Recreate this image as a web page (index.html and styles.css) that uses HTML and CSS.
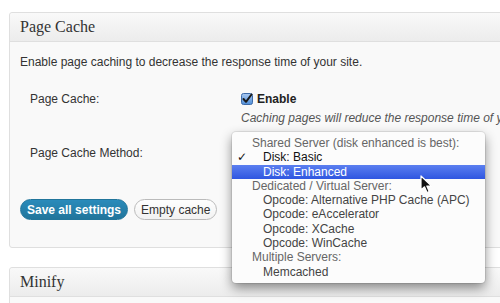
FILE: index.html
```html
<!DOCTYPE html>
<html lang="en">
<head>
    <meta charset="UTF-8">
    <title>Page Cache</title>
    <link rel="stylesheet" href="styles.css">
</head>
<body>
    <div class="wrap">
        <div class="postbox">
            <h3 class="hndle">Page Cache</h3>
            <div class="inside">
                <p class="intro">Enable page caching to decrease the response time of your site.</p>
                <div class="form-row">
                    <div class="label">Page Cache:</div>
                    <div class="field">
                        <label class="check">
                            <svg class="checkbox" width="12" height="12" viewBox="0 0 12 12">
                                <defs>
                                    <linearGradient id="cb" x1="0" y1="0" x2="0" y2="1">
                                        <stop offset="0" stop-color="#a9c8f0"/>
                                        <stop offset="1" stop-color="#4f8ed8"/>
                                    </linearGradient>
                                </defs>
                                <rect x="0.5" y="0.5" width="11" height="11" rx="2" fill="url(#cb)" stroke="#3c6aa8"/>
                                <path d="M2.5 6 L5 8.8 L10.5 1.5" fill="none" stroke="#1a1a1a" stroke-width="2" stroke-linecap="round" stroke-linejoin="round"/>
                            </svg>
                            <b>Enable</b>
                        </label>
                        <p class="note">Caching pages will reduce the response time of your site.</p>
                    </div>
                </div>
                <div class="form-row method">
                    <div class="label">Page Cache Method:</div>
                    <div class="field">
                        <div class="select-holder">
                            <ul class="popup-menu">
                                <li class="group">Shared Server (disk enhanced is best):</li>
                                <li class="option checked">Disk: Basic</li>
                                <li class="option active">Disk: Enhanced</li>
                                <li class="group">Dedicated / Virtual Server:</li>
                                <li class="option">Opcode: Alternative PHP Cache (APC)</li>
                                <li class="option">Opcode: eAccelerator</li>
                                <li class="option">Opcode: XCache</li>
                                <li class="option">Opcode: WinCache</li>
                                <li class="group">Multiple Servers:</li>
                                <li class="option">Memcached</li>
                            </ul>
                            <svg class="pointer" width="14" height="20" viewBox="0 0 14 20">
                                <path d="M1 1 L1 15 L4.5 11.8 L7 17.5 L9.2 16.5 L6.8 11 L11.5 11 Z" fill="#111" stroke="#fff" stroke-width="1.2" stroke-linejoin="round"/>
                            </svg>
                        </div>
                    </div>
                </div>
                <p class="submit">
                    <button class="button-primary">Save all settings</button>
                    <button class="button">Empty cache</button>
                </p>
            </div>
        </div>

        <div class="postbox">
            <h3 class="hndle">Minify</h3>
            <div class="inside"></div>
        </div>
    </div>
</body>
</html>
```

FILE: styles.css
```css
body {
    margin: 0;
    background: #fff;
    font-family: "Liberation Sans", Arial, sans-serif;
    font-size: 12px;
    color: #333;
    overflow: hidden;
}
.wrap {
    padding: 12px 0 0 9px;
    width: 540px;
}
.postbox {
    border: 1px solid #dfdfdf;
    border-radius: 3px;
    background: #f9f9f9;
    margin-bottom: 19px;
}
.hndle {
    margin: 0;
    height: 28px;
    line-height: 28px;
    padding: 0 10px;
    font-family: "Liberation Serif", Georgia, serif;
    font-weight: normal;
    font-size: 16px;
    color: #333;
    background: linear-gradient(to bottom, #f9f9f9, #ececec);
    border-bottom: 1px solid #dfdfdf;
    border-radius: 3px 3px 0 0;
}
.inside {
    padding: 0 10px;
    min-height: 10px;
}
.intro {
    margin: 0;
    padding-top: 12px;
    line-height: 16px;
}
.form-row {
    display: flex;
    padding-left: 10px;
    margin-top: 21px;
}
.form-row.method {
    margin-top: 19px;
    height: 20px;
}
.label {
    width: 211px;
    flex-shrink: 0;
    line-height: 16px;
}
.field {
    flex: 1;
    min-width: 0;
}
.check {
    display: flex;
    align-items: center;
    gap: 4px;
    height: 16px;
    color: #222;
}
.checkbox {
    display: block;
}
.note {
    margin: 3px 0 0;
    line-height: 16px;
    font-style: italic;
    color: #555;
    white-space: nowrap;
}
.select-holder {
    position: relative;
}
.popup-menu {
    position: absolute;
    left: -9px;
    top: -13px;
    width: 253px;
    margin: 0;
    padding: 4px 0;
    list-style: none;
    background: #fcfcfc;
    border-radius: 4px;
    box-shadow: 0 0 0 1px rgba(0, 0, 0, 0.08), 0 5px 12px rgba(0, 0, 0, 0.45);
    z-index: 2;
}
.popup-menu li {
    height: 14.3px;
    line-height: 14.3px;
    font-size: 12px;
    white-space: nowrap;
}
.popup-menu .group {
    padding-left: 20px;
    color: #666;
}
.popup-menu .option {
    padding-left: 31px;
    color: #444;
}
.popup-menu .checked {
    position: relative;
    color: #111;
}
.popup-menu .checked::before {
    content: "\2713";
    position: absolute;
    left: 5px;
    top: 0;
    font-family: "DejaVu Sans", sans-serif;
    font-size: 12px;
    color: #111;
}
.popup-menu .active {
    color: #fff;
    background: linear-gradient(to bottom, #5b7ff0, #2f56e0);
}
.pointer {
    position: absolute;
    left: 179px;
    top: 30px;
    z-index: 3;
}
.submit {
    margin: 34px 0 0;
    padding-bottom: 27px;
    display: flex;
    gap: 6px;
}
.button-primary, .button {
    height: 21px;
    padding: 0 6px;
    border-radius: 11px;
    font-family: "Liberation Sans", Arial, sans-serif;
    font-size: 12px;
    cursor: pointer;
}
.button-primary {
    border: 1px solid #21759b;
    background: linear-gradient(to bottom, #2a8bbb, #21759b);
    color: #fff;
    font-weight: bold;
}
.button {
    border: 1px solid #bbb;
    background: linear-gradient(to bottom, #fefefe, #f2f2f2);
    color: #333;
}
```
